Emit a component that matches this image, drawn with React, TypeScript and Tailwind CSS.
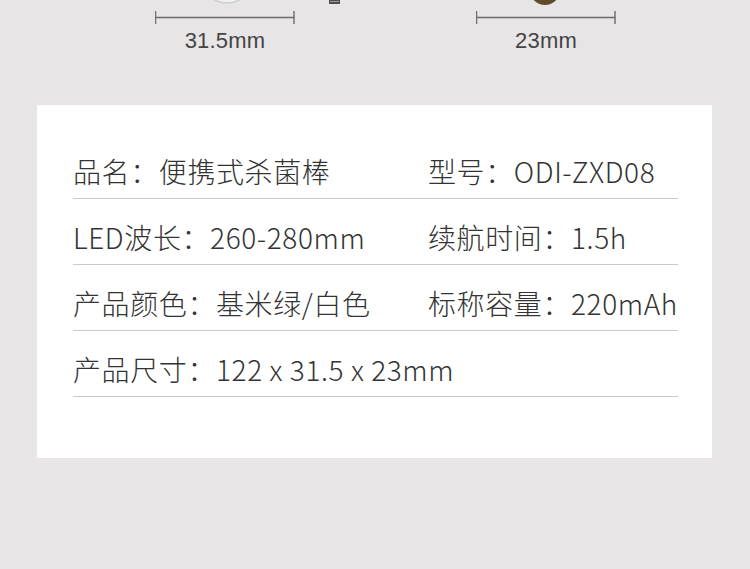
import React from 'react';

const cjk = { fontFamily: '"Noto Sans CJK SC", "Noto Sans", sans-serif' };

interface SpecRow {
  left: string;
  right?: string;
}

const rows: SpecRow[] = [
  { left: '品名：便携式杀菌棒', right: '型号：ODI-ZXD08' },
  { left: 'LED波长：260-280mm', right: '续航时间：1.5h' },
  { left: '产品颜色：基米绿/白色', right: '标称容量：220mAh' },
  { left: '产品尺寸：122 x 31.5 x 23mm' },
];

const DimLine: React.FC = () => (
  <svg width="140" height="26" viewBox="0 0 140 26" className="block">
    <line x1="0.5" y1="11" x2="0.5" y2="24" stroke="#707070" strokeWidth="1.5" />
    <line x1="139" y1="11" x2="139" y2="24" stroke="#707070" strokeWidth="1.5" />
    <line x1="1" y1="17.5" x2="139" y2="17.5" stroke="#6a6a6a" strokeWidth="1.5" />
  </svg>
);

export default function App() {
  return (
    <div className="w-[750px] h-[569px] bg-[#e7e5e5] overflow-hidden relative">
      {/* cut-off product pictures above the dimension lines */}
      <svg width="750" height="8" viewBox="0 0 750 8" className="absolute top-0 left-0">
        <ellipse cx="227" cy="-14" rx="21" ry="17" fill="#f1f1f1" stroke="#cfcfcf" strokeWidth="1.5" />
        <rect x="329" y="0" width="11" height="4" fill="#4d4d4d" />
        <rect x="330" y="1" width="9" height="1" fill="#9a9a9a" />
        <ellipse cx="545" cy="-12" rx="16" ry="17" fill="#5f4a2c" />
      </svg>

      {/* dimension marks */}
      <div className="flex pl-[155px] gap-[181px]">
        <div className="w-[140px] flex flex-col items-center">
          <DimLine />
          <span
            className="text-[22px] leading-[30px] text-[#444] tracking-[0.2px]"
            style={{ fontFamily: '"Liberation Sans", Arial, sans-serif' }}
          >
            31.5mm
          </span>
        </div>
        <div className="w-[140px] flex flex-col items-center">
          <DimLine />
          <span
            className="text-[22px] leading-[30px] text-[#444] tracking-[0.2px]"
            style={{ fontFamily: '"Liberation Sans", Arial, sans-serif' }}
          >
            23mm
          </span>
        </div>
      </div>

      {/* spec card */}
      <div className="mt-[49px] ml-[37px] w-[675px] h-[353px] bg-white pt-[28px] pl-[36px] pr-[34px]" style={cjk}>
        {rows.map((r, i) => (
          <div
            key={i}
            className="h-[66px] border-b-[1.5px] border-[#c9c9c9] flex items-start pt-[18px] text-[28px] leading-[40px] font-light tracking-[0.6px] text-[#333]"
          >
            <span className="w-[355px] whitespace-nowrap">{r.left}</span>
            {r.right && <span className="whitespace-nowrap">{r.right}</span>}
          </div>
        ))}
      </div>
    </div>
  );
}
